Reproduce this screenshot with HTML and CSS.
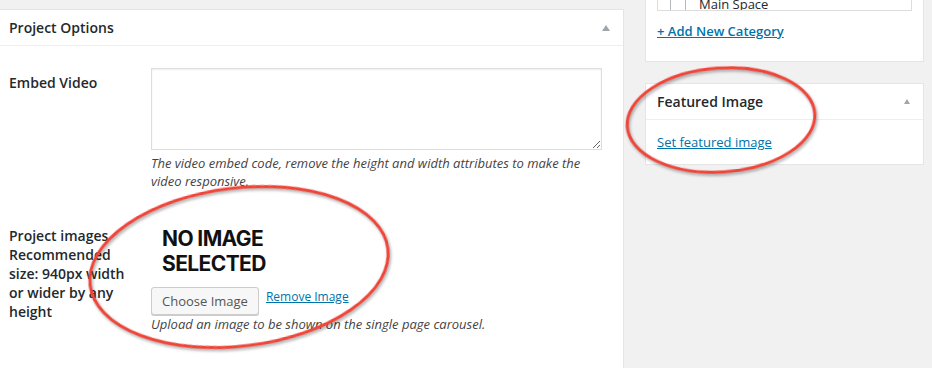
FILE: index.html
```html
<!DOCTYPE html>
<html lang="en">
<head>
  <meta charset="UTF-8">
  <title>Edit Project</title>
  <link rel="stylesheet" href="styles.css">
</head>
<body>
  <div class="screen">
    <div class="main-col">
      <div class="postbox main-box">
        <div class="postbox-head">
          <h2>Project Options</h2>
          <span class="toggle"></span>
        </div>
        <div class="postbox-inside">
          <div class="field">
            <label class="field-label" for="embed">Embed Video</label>
            <div class="field-control">
              <textarea id="embed" class="embed-input"></textarea>
              <p class="desc">The video embed code, remove the height and width attributes to make the video responsive.</p>
            </div>
          </div>
          <div class="field field-images">
            <label class="field-label">Project images Recommended size: 940px width or wider by any height</label>
            <div class="field-control">
              <div class="no-image">NO IMAGE<br>SELECTED</div>
              <div class="image-actions">
                <button type="button" class="button">Choose Image</button>
                <a href="#" class="remove-link">Remove Image</a>
              </div>
              <p class="desc">Upload an image to be shown on the single page carousel.</p>
            </div>
          </div>
        </div>
      </div>
    </div>

    <div class="side-col">
      <div class="postbox cat-box">
        <div class="cat-list">
          <div class="cat-item"><span class="check"></span><span>Main Space</span></div>
        </div>
        <a href="#" class="add-link">+ Add New Category</a>
      </div>

      <div class="postbox featured-box">
        <div class="postbox-head">
          <h2>Featured Image</h2>
          <span class="toggle"></span>
        </div>
        <div class="featured-inside">
          <a href="#" class="featured-link">Set featured image</a>
        </div>
      </div>
    </div>
  </div>

  <svg class="marks" width="932" height="368" viewBox="0 0 932 368">
    <ellipse cx="239" cy="267" rx="150" ry="79" transform="rotate(-7 239 267)"></ellipse>
    <ellipse cx="721" cy="120" rx="94" ry="52" transform="rotate(-4 721 120)"></ellipse>
  </svg>
</body>
</html>
```

FILE: styles.css
```css
body {
  margin: 0;
  background-color: #f1f1f1;
  font-family: "Open Sans", "Liberation Sans", sans-serif;
  color: #23282d;
  font-size: 13px;
  position: relative;
  overflow: hidden;
}

.screen {
  display: flex;
  height: 368px;
}

.main-col {
  width: 624px;
  padding-top: 9px;
  box-sizing: border-box;
  display: flex;
}

.postbox {
  background-color: #fff;
  border: 1px solid #e5e5e5;
  box-sizing: border-box;
}

.main-box {
  flex: 1;
  border-left: none;
  border-bottom: none;
}

.postbox-head {
  height: 36px;
  border-bottom: 1px solid #eee;
  box-sizing: border-box;
  display: flex;
  align-items: center;
  justify-content: space-between;
  padding: 0 13px 0 9px;
}

.postbox-head h2 {
  margin: 0;
  font-size: 14px;
  font-weight: 600;
  line-height: 19px;
}

.toggle {
  width: 0;
  height: 0;
  border-left: 4px solid transparent;
  border-right: 4px solid transparent;
  border-bottom: 6px solid #a0a5aa;
}

.postbox-inside {
  padding: 22px 0 0 9px;
}

.field {
  display: grid;
  grid-template-columns: 130px 451px;
  column-gap: 12px;
}

.field-images {
  margin-top: 36px;
}

.field-label {
  font-size: 14px;
  font-weight: 600;
  line-height: 19px;
  padding-top: 5px;
}

.field-images .field-label {
  padding-top: 0;
}

.embed-input {
  display: block;
  width: 451px;
  height: 82px;
  box-sizing: border-box;
  margin: 0;
  border: 1px solid #ddd;
  box-shadow: inset 0 1px 2px rgba(0, 0, 0, 0.07);
  font-family: inherit;
}

.desc {
  margin: 4px 0 0;
  font-style: italic;
  font-size: 13px;
  line-height: 18px;
  color: #444;
}

.no-image {
  margin-left: 11px;
  font-family: Inter, "Liberation Sans", sans-serif;
  font-weight: 700;
  font-size: 21px;
  line-height: 25px;
  letter-spacing: -0.6px;
  color: #111;
}

.image-actions {
  display: flex;
  align-items: center;
  gap: 7px;
  margin-top: 11px;
}

.button {
  height: 28px;
  padding: 0 10px;
  font-family: inherit;
  font-size: 13px;
  color: #555;
  background-color: #f7f7f7;
  border: 1px solid #ccc;
  border-radius: 3px;
  box-shadow: 0 1px 0 #ccc;
}

.remove-link {
  font-size: 12px;
  color: #0073aa;
  margin-top: -10px;
}

.image-actions + .desc {
  margin-top: 0;
}

.side-col {
  padding-left: 21px;
  width: 279px;
}

.cat-box {
  border-top: none;
  padding: 0 11px 20px 11px;
}

.cat-list {
  height: 11px;
  border: 1px solid #ddd;
  border-top: none;
  box-sizing: border-box;
  display: flex;
  align-items: flex-end;
  overflow: hidden;
}

.cat-item {
  display: flex;
  align-items: center;
  gap: 13px;
  padding-left: 12px;
  line-height: 19px;
  margin-bottom: -4px;
}

.check {
  width: 16px;
  height: 16px;
  border: 1px solid #b4b9be;
  box-sizing: border-box;
}

.add-link {
  display: block;
  margin-top: 11px;
  font-weight: 600;
  line-height: 19px;
  color: #0073aa;
}

.featured-box {
  margin-top: 21px;
}

.featured-box .postbox-head {
  padding: 0 13px 0 11px;
  height: 36px;
}

.featured-box .toggle {
  border-left-width: 3.5px;
  border-right-width: 3.5px;
  border-bottom-width: 5px;
}

.featured-inside {
  padding: 12px 11px 12px;
  line-height: 20px;
}

.featured-link {
  color: #0073aa;
}

.marks {
  position: absolute;
  top: 0;
  left: 0;
  pointer-events: none;
}

.marks ellipse {
  fill: none;
  stroke: #f04438;
  stroke-width: 3;
  filter: drop-shadow(1px 2px 1.5px rgba(0, 0, 0, 0.35));
}
```
